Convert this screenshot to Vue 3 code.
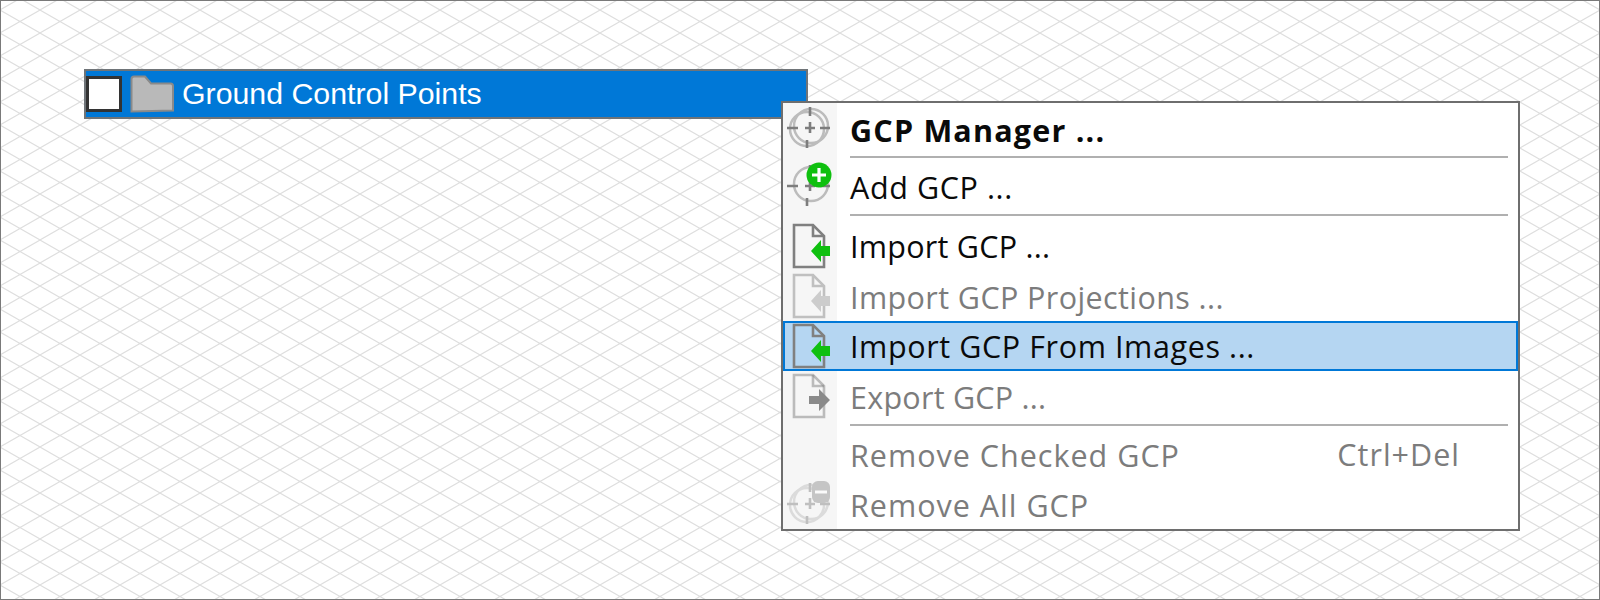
<script setup>
const items = [
  { label: 'GCP Manager ...', icon: 'target', bold: true },
  { sep: true },
  { label: 'Add GCP ...', icon: 'add', lower: true },
  { sep: true, tall: true },
  { label: 'Import GCP ...', icon: 'import', tight: true },
  { label: 'Import GCP Projections ...', icon: 'import', disabled: true, narrow: true },
  { label: 'Import GCP From Images ...', icon: 'import', active: true },
  { label: 'Export GCP ...', icon: 'export', disabled: true, tight: true },
  { sep: true },
  { label: 'Remove Checked GCP', shortcut: 'Ctrl+Del', disabled: true, wide: true },
  { label: 'Remove All GCP', icon: 'remove', disabled: true, wide: true },
]
</script>

<template>
  <div class="stage">
    <svg class="grid" width="1600" height="600" aria-hidden="true">
      <defs>
        <pattern id="iso" width="40" height="23" patternUnits="userSpaceOnUse" patternTransform="translate(0 10)">
          <path d="M0 0L40 23M0 23L40 0" stroke="#dedede" stroke-width="1.1" fill="none" />
        </pattern>
      </defs>
      <rect width="1600" height="600" fill="url(#iso)" />
    </svg>

    <div class="tree-row">
      <span class="check"></span>
      <svg class="folder" width="44" height="38" viewBox="0 0 44 38">
        <path d="M1.500 36.500V4q0-2.500 2.500-2.500h11l6 7h19.500q2.500 0 2.500 2.500v24.500z" fill="#b9b9b9" stroke="#8a8a8a" stroke-width="2" />
      </svg>
      <span class="tree-label">Ground Control Points</span>
    </div>

    <div class="menu">
      <template v-for="(it, i) in items" :key="i">
        <div v-if="it.sep" class="sep" :class="{ tall: it.tall }"><span class="sep-line"></span></div>
        <div v-else class="row" :class="{ bold: it.bold, disabled: it.disabled, active: it.active, lower: it.lower, narrow: it.narrow, wide: it.wide, tight: it.tight }">
          <span class="gutter">
            <svg v-if="it.icon === 'target' || it.icon === 'add' || it.icon === 'remove'" class="icon" :class="{ faded: it.icon === 'remove' }" width="48" height="48" viewBox="0 0 48 48">
              <circle cx="25" cy="22" r="17" fill="none" stroke="#bcbcbc" stroke-width="2.5" />
              <circle v-if="it.icon !== 'add'" cx="21" cy="25" r="17" fill="none" stroke="#bcbcbc" stroke-width="2.5" />
              <path d="M1 24h11M19 24h10M34 24h10M24 3v9M24 18v11M21 36v8" stroke="#7d7d7d" stroke-width="2.6" fill="none" />
              <template v-if="it.icon === 'add'">
                <circle cx="33" cy="13" r="12.500" fill="#0fc00f" />
                <path d="M33 6v14M26 13h14" stroke="#fff" stroke-width="3.200" />
              </template>
              <template v-if="it.icon === 'remove'">
                <rect x="26" y="1" width="18" height="22" rx="6" fill="#8a8a8a" />
                <path d="M29 12h12" stroke="#fff" stroke-width="3" />
              </template>
            </svg>
            <svg v-else-if="it.icon" class="icon" :class="{ faded: it.disabled && it.icon === 'import', exp: it.icon === 'export' }" width="48" height="48" viewBox="0 0 48 48">
              <path d="M8 3h19l11 11v31H8z" fill="none" stroke="#808080" stroke-width="2.6" />
              <path d="M27 3v11h11" fill="none" stroke="#808080" stroke-width="2.6" />
              <path v-if="it.icon === 'import'" d="M25 29l10-11v6h9v10h-9v6z" :fill="it.disabled ? '#9a9a9a' : '#0fc00f'" />
              <path v-else d="M23 24h10v-7l11 11-11 11v-7H23z" fill="#8a8a8a" />
            </svg>
          </span>
          <span class="label">{{ it.label }}</span>
          <span v-if="it.shortcut" class="shortcut">{{ it.shortcut }}</span>
        </div>
      </template>
    </div>
  </div>
</template>

<style>
html, body { margin: 0; background: #fff; }
</style>

<style scoped>
.stage {
  position: relative;
  width: 1600px;
  height: 600px;
  box-sizing: border-box;
  overflow: hidden;
  background: #fff;
  padding: 69px 0 0 84px;
}
.stage::after {
  content: '';
  position: absolute;
  inset: 0;
  border: 1.5px solid #7a7a7a;
  pointer-events: none;
}
.grid { position: absolute; left: 0; top: 0; }
.tree-row {
  position: relative;
  box-sizing: border-box;
  width: 724px;
  height: 50px;
  display: flex;
  align-items: center;
  background: #0078d7;
  border: 2px solid #6f7478;
  font-family: "Liberation Sans", Arial, sans-serif;
  font-size: 30.300px;
  color: #fff;
}
.check {
  box-sizing: border-box;
  width: 36px;
  height: 36px;
  background: #fff;
  border: 3px solid #333;
}
.folder { margin-left: 8px; }
.tree-label { margin-left: 8px; }
.menu {
  position: absolute;
  left: 781px;
  top: 101px;
  width: 739px;
  box-sizing: border-box;
  border: 2px solid #6e6e6e;
  font-family: "Open Sans", "Noto Sans", sans-serif;
  font-size: 30.500px;
  letter-spacing: 0.6px;
  color: #0a0a0a;
  background: linear-gradient(90deg, #f6f6f6 54px, #fff 54px);
}
.row {
  position: relative;
  box-sizing: border-box;
  height: 50px;
  display: flex;
  align-items: center;
  padding-right: 58px;
}
.row.bold { font-weight: 700; letter-spacing: 1.2px; }
.row.bold .label { padding-top: 3px; }
.row.lower .label { padding-top: 2px; }
.row.disabled { color: #7c7c7c; }
.row.disabled .label { padding-top: 2px; }
.row.narrow .label { letter-spacing: 0.4px; }
.row.tight .label { letter-spacing: 0.25px; }
.row.wide .label { letter-spacing: 1px; }
.row.active {
  background: #b5d6f2;
  border: 2px solid #0078d7;
}
.gutter {
  flex: none;
  width: 67px;
  height: 48px;
  display: flex;
  align-items: center;
  padding-left: 3px;
  box-sizing: border-box;
}
.row.active .gutter { width: 65px; padding-left: 1px; }
.icon { display: block; }
.icon.faded { opacity: 0.45; }
.icon.exp path:not(:last-child) { opacity: 0.5; }
.label { flex: 1; }
.sep { display: flex; height: 8px; padding-left: 67px; align-items: flex-start; }
.sep.tall { height: 10px; }
.sep-line { flex: 1; height: 2px; background: #b0b0b0; margin: 3px 10px 0 0; }
.shortcut { flex: none; letter-spacing: 1px; }
</style>
